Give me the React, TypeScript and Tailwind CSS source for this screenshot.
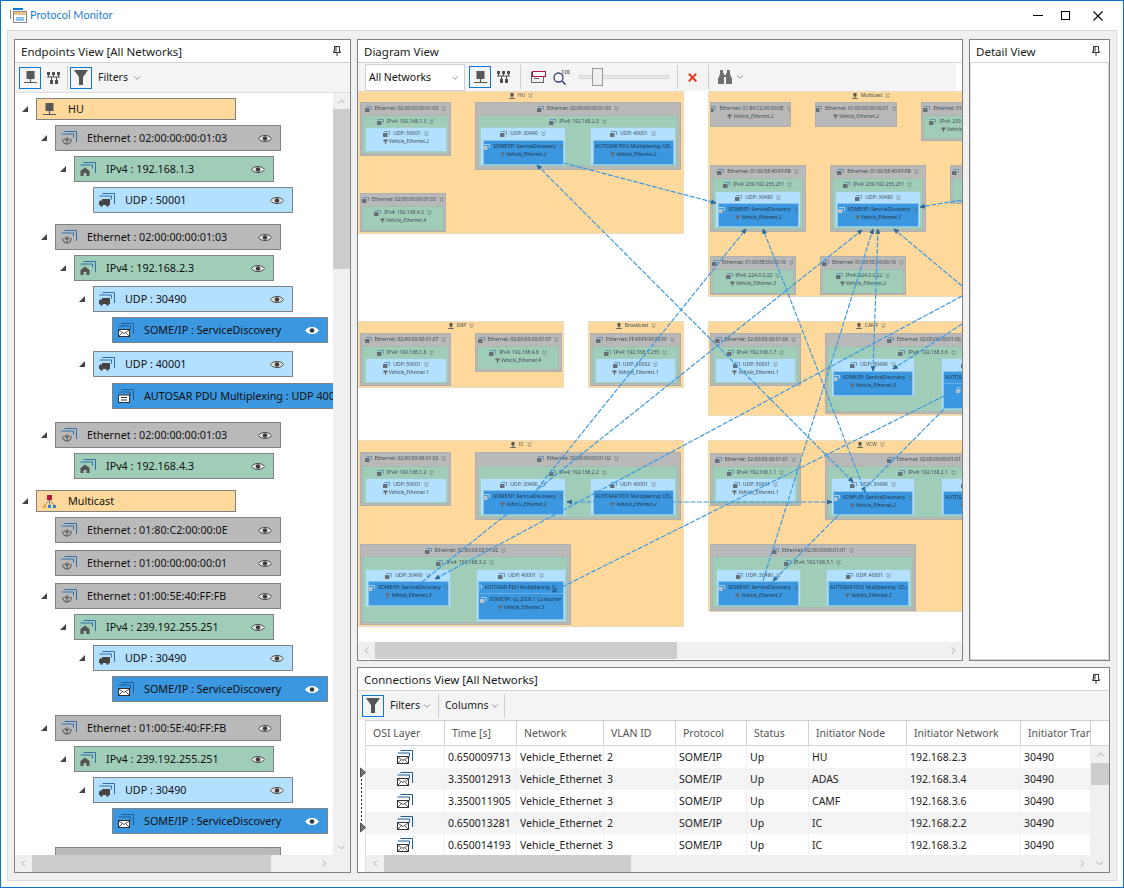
import type { ReactNode } from "react";
import { ChevronDown, ChevronLeft, ChevronRight, ChevronUp } from "lucide-react";

// ---- icons ----------------------------------------------------------------

function Arcs({ color = "#2f6fae" }: { color?: string }) {
  return <path d="M3.5 .5H15.5V11M.5 3H12.5V6.5" fill="none" stroke={color} strokeWidth="1" />;
}

function EthIcon() {
  return (
    <svg width="16" height="14" viewBox="0 0 16 14" className="shrink-0">
      <Arcs />
      <path d="M6 6v7M1.500 8c.5 3 2.500 5 4.500 5s4-2 4.500-5M3.500 7.500 6 10l2.500-2.500" fill="none" stroke="#666" strokeWidth="1.300" />
    </svg>
  );
}

function IpIcon() {
  return (
    <svg width="16" height="14" viewBox="0 0 16 14" className="shrink-0">
      <Arcs />
      <path d="M.5 9 5 5.500 9.500 9v5H6.500v-3h-3v3H.5z" fill="#555" />
    </svg>
  );
}

function UdpIcon() {
  return (
    <svg width="16" height="14" viewBox="0 0 16 14" className="shrink-0">
      <Arcs />
      <rect x="3" y="6" width="8" height="6" fill="#444" />
      <path d="M0 12V8.500L1 7.500H3V12z" fill="#444" />
      <circle cx="2.500" cy="12.500" r="1.300" fill="#444" />
      <circle cx="8.500" cy="12.500" r="1.300" fill="#444" />
    </svg>
  );
}

function MailIcon() {
  return (
    <svg width="16" height="14" viewBox="0 0 16 14" className="shrink-0">
      <Arcs color="#1f5d99" />
      <rect x=".5" y="6.500" width="11" height="7" fill="#fff" stroke="#333" />
      <path d="M.5 7 6 10.500 11.500 7M.5 13.500 4.500 9.500M11.500 13.500 7.500 9.500" fill="none" stroke="#333" strokeWidth=".8" />
    </svg>
  );
}

function PduIcon() {
  return (
    <svg width="16" height="14" viewBox="0 0 16 14" className="shrink-0">
      <Arcs color="#1f5d99" />
      <rect x=".5" y="6" width="11" height="7.500" fill="#fff" stroke="#333" />
      <path d="M3 8.500h6M3 11h6" stroke="#333" />
    </svg>
  );
}

function Eye({ light = false }: { light?: boolean }) {
  const c = light ? "#fff" : "#4a4a4a";
  return (
    <svg width="14" height="9" viewBox="0 0 14 9" className="shrink-0">
      <path d="M.5 4.500C3 .5 11 .5 13.500 4.500 11 8.500 3 8.500.5 4.500Z" fill={light ? "#fff" : "#e8e8e8"} stroke={c} strokeWidth="1" />
      <circle cx="7" cy="4.500" r="2.300" fill="#3c3c3c" />
    </svg>
  );
}

function Pin() {
  return (
    <svg width="8" height="10" viewBox="0 0 8 10">
      <path d="M1.500.5h5v5h1v1h-7v-1h1zM3 1v4.500" fill="#fff" stroke="#333" strokeWidth="1" />
      <path d="M4 6.500V10" stroke="#333" strokeWidth="1" />
    </svg>
  );
}

function NodeIcon() {
  return (
    <svg width="13" height="13" viewBox="0 0 13 13" className="shrink-0">
      <rect x="2.500" y="0" width="8" height="8" fill="#575757" />
      <path d="M6.500 8v3.500M0 11.500h13" stroke="#575757" strokeWidth="1.200" />
    </svg>
  );
}

function McastIcon() {
  return (
    <svg width="13" height="13" viewBox="0 0 13 13" className="shrink-0">
      <rect x="4" y="0" width="5" height="5" fill="#b01e3c" />
      <path d="M6.500 5 2 10M6.500 5v5M6.500 5 11 10" stroke="#777" strokeWidth=".8" />
      <rect x="0" y="10" width="3" height="3" fill="#f5a33b" />
      <rect x="5" y="10" width="3" height="3" fill="#2f86d6" />
      <rect x="10" y="10" width="3" height="3" fill="#2f86d6" />
    </svg>
  );
}

function NetIcon() {
  return (
    <svg width="13" height="12" viewBox="0 0 13 12" className="shrink-0">
      <path d="M0 0h3v3H0zM5 0h3v3H5zM10 0h3v3h-3zM3 8h3v4H3zM8 8h3v4H8z" fill="#4f4f4f" />
      <path d="M0 5h13M1.500 3v2M6.500 3v2M11.500 3v2M4.500 5v3M9.500 5v3" stroke="#4f4f4f" strokeWidth="1" />
    </svg>
  );
}

function Funnel() {
  return (
    <svg width="14" height="15" viewBox="0 0 14 15">
      <path d="M0 0h14L9 7v8H5V7z" fill="#555" />
    </svg>
  );
}

function Chevron() {
  return <ChevronDown size={10} strokeWidth={1.500} className="text-[#555]" />;
}

function ToolButton({ children }: { children: ReactNode }) {
  return (
    <div className="flex h-[22px] w-[22px] items-center justify-center border border-[#0a78d4]">{children}</div>
  );
}

function Sep() {
  return <div className="h-[24px] w-px bg-[#cfcfcf]" />;
}

// ---- scrollbars -------------------------------------------------------------

function HScroll({ thumb }: { thumb: string }) {
  return (
    <div className="flex h-[17px] shrink-0 items-center bg-[#f0f0f0] text-[#a0a0a0]">
      <div className="flex h-[17px] w-[17px] shrink-0 items-center justify-center">
        <ChevronLeft size={11} />
      </div>
      <div className={`h-[17px] shrink-0 bg-[#cdcdcd] ${thumb}`} />
      <div className="flex-1" />
      <div className="flex h-[17px] w-[17px] shrink-0 items-center justify-center">
        <ChevronRight size={11} />
      </div>
    </div>
  );
}

function VScroll({ thumb }: { thumb: string }) {
  return (
    <div className="flex w-[17px] shrink-0 flex-col bg-[#f0f0f0] pb-[17px] text-[#a0a0a0]">
      <div className="flex h-[16px] shrink-0 items-center justify-center">
        <ChevronUp size={11} />
      </div>
      <div className={`shrink-0 bg-[#cdcdcd] ${thumb}`} />
      <div className="flex-1" />
      <div className="flex h-[16px] shrink-0 items-center justify-center">
        <ChevronDown size={11} />
      </div>
    </div>
  );
}

// ---- panel ------------------------------------------------------------------

function Panel({ title, pin = true, className, children }: { title: string; pin?: boolean; className: string; children: ReactNode }) {
  return (
    <div className={`flex flex-col border border-[#808080] bg-white ${className}`}>
      <div className="flex h-[23px] shrink-0 items-center justify-between border-b border-[#d4d4d4] pl-[6px] pr-[9px] text-[#1a1a1a]">
        <span className="pt-px text-[11.5px]">{title}</span>
        {pin && <Pin />}
      </div>
      {children}
    </div>
  );
}

// ---- endpoints tree ----------------------------------------------------------

type Kind = "node" | "eth" | "ip" | "udp" | "some" | "pdu" | "mcast";

interface TreeRow {
  kind: Kind;
  text: string;
  indent: string;
  mt: string;
  width: string;
  arrow?: boolean;
  noEye?: boolean;
}

const rowBg: Record<Kind, string> = {
  node: "bg-[#ffd99b] h-[22px]",
  mcast: "bg-[#ffd99b] h-[22px]",
  eth: "bg-[#b9b9b9] h-[26px]",
  ip: "bg-[#9fcdb7] h-[26px]",
  udp: "bg-[#b3e0ff] h-[26px]",
  some: "bg-[#3b97df] h-[26px]",
  pdu: "bg-[#3b97df] h-[26px]",
};

const rowIcon: Record<Kind, ReactNode> = {
  node: <NodeIcon />,
  mcast: <McastIcon />,
  eth: <EthIcon />,
  ip: <IpIcon />,
  udp: <UdpIcon />,
  some: <MailIcon />,
  pdu: <PduIcon />,
};

const L0 = "ml-[7px]";
const L1 = "ml-[26px]";
const L2 = "ml-[45px]";
const L3 = "ml-[64px]";
const L4 = "ml-[83px]";
const W1 = "w-[226px]";
const W2 = "w-[200px]";
const W4 = "w-[216px]";

const tree: TreeRow[] = [
  { kind: "node", text: "HU", indent: L0, mt: "mt-[5px]", width: W2, arrow: true },
  { kind: "eth", text: "Ethernet : 02:00:00:00:01:03", indent: L1, mt: "mt-[5px]", width: W1, arrow: true },
  { kind: "ip", text: "IPv4 : 192.168.1.3", indent: L2, mt: "mt-[5px]", width: W2, arrow: true },
  { kind: "udp", text: "UDP : 50001", indent: L3, mt: "mt-[5px]", width: W2 },
  { kind: "eth", text: "Ethernet : 02:00:00:00:01:03", indent: L1, mt: "mt-[11px]", width: W1, arrow: true },
  { kind: "ip", text: "IPv4 : 192.168.2.3", indent: L2, mt: "mt-[5px]", width: W2, arrow: true },
  { kind: "udp", text: "UDP : 30490", indent: L3, mt: "mt-[5px]", width: W2, arrow: true },
  { kind: "some", text: "SOME/IP : ServiceDiscovery", indent: L4, mt: "mt-[5px]", width: W4 },
  { kind: "udp", text: "UDP : 40001", indent: L3, mt: "mt-[8px]", width: W2, arrow: true },
  { kind: "pdu", text: "AUTOSAR PDU Multiplexing : UDP 40001", indent: L4, mt: "mt-[6px]", width: "w-[260px]", noEye: true },
  { kind: "eth", text: "Ethernet : 02:00:00:00:01:03", indent: L1, mt: "mt-[13px]", width: W1, arrow: true },
  { kind: "ip", text: "IPv4 : 192.168.4.3", indent: L2, mt: "mt-[5px]", width: W2 },
  { kind: "mcast", text: "Multicast", indent: L0, mt: "mt-[11px]", width: W2, arrow: true },
  { kind: "eth", text: "Ethernet : 01:80:C2:00:00:0E", indent: L1, mt: "mt-[5px]", width: W1 },
  { kind: "eth", text: "Ethernet : 01:00:00:00:00:01", indent: L1, mt: "mt-[7px]", width: W1 },
  { kind: "eth", text: "Ethernet : 01:00:5E:40:FF:FB", indent: L1, mt: "mt-[7px]", width: W1, arrow: true },
  { kind: "ip", text: "IPv4 : 239.192.255.251", indent: L2, mt: "mt-[5px]", width: W2, arrow: true },
  { kind: "udp", text: "UDP : 30490", indent: L3, mt: "mt-[5px]", width: W2, arrow: true },
  { kind: "some", text: "SOME/IP : ServiceDiscovery", indent: L4, mt: "mt-[5px]", width: W4 },
  { kind: "eth", text: "Ethernet : 01:00:5E:40:FF:FB", indent: L1, mt: "mt-[13px]", width: W1, arrow: true },
  { kind: "ip", text: "IPv4 : 239.192.255.251", indent: L2, mt: "mt-[5px]", width: W2, arrow: true },
  { kind: "udp", text: "UDP : 30490", indent: L3, mt: "mt-[5px]", width: W2, arrow: true },
  { kind: "some", text: "SOME/IP : ServiceDiscovery", indent: L4, mt: "mt-[5px]", width: W4 },
  { kind: "eth", text: "", indent: L1, mt: "mt-[13px]", width: W1 },
];

function TreeItem({ row }: { row: TreeRow }) {
  const isGroup = row.kind === "node" || row.kind === "mcast";
  return (
    <div className={`flex items-center ${row.indent} ${row.mt}`}>
      <div className="flex w-[14px] shrink-0 items-center">
        {row.arrow && (
          <svg width="6" height="6" viewBox="0 0 6 6">
            <path d="M6 0v6H0z" fill="#444" />
          </svg>
        )}
      </div>
      <div
        className={`flex shrink-0 items-center border border-[#828282] text-[10.75px] text-[#111] ${rowBg[row.kind]} ${row.width} ${isGroup ? "pl-[6px]" : "pl-[5px]"}`}
      >
        {row.text && rowIcon[row.kind]}
        <span className={`whitespace-nowrap pt-px ${isGroup ? "ml-[12px]" : "ml-[10px]"}`}>{row.text}</span>
        {!isGroup && !row.noEye && row.text && (
          <div className="ml-auto mr-[8px]">
            <Eye light={row.kind === "some"} />
          </div>
        )}
      </div>
    </div>
  );
}

// ---- diagram canvas ----------------------------------------------------------

type BoxKind = "group" | "eth" | "ip" | "udp" | "some";

const boxBg: Record<BoxKind, string> = {
  group: "bg-[#ffd99b] border-[#e9dcc0]",
  eth: "bg-[#b9b9b9] border-[#b0b0a8]",
  ip: "bg-[#9fcdb7] border-[#aab8b0]",
  udp: "bg-[#b3e0ff] border-[#a4cdc8]",
  some: "bg-[#3b97df] border-[#86c4ee]",
};

interface Box {
  kind: BoxKind;
  x: number;
  y: number;
  w: number;
  h: number;
  label: string;
  sub?: string;
  extra?: string;
}

const VE = "Vehicle_Ethernet.";
const SD = "SOME/IP: ServiceDiscovery";
const PDU = "AUTOSAR PDU Multiplexing: UD...";

function b(kind: BoxKind, x: number, y: number, w: number, h: number, label: string, sub?: string, extra?: string): Box {
  return { kind, x, y, w, h, label, sub, extra };
}

const boxes: Box[] = [
  // HU
  b("group", 358, 92, 326, 143, "HU"),
  b("eth", 360, 103, 91, 54, "Ethernet: 02:00:00:00:01:03"),
  b("ip", 362, 116, 87, 39, "IPv4: 192.168.1.3"),
  b("udp", 365, 128, 82, 25, "UDP: 50001", VE + "2"),
  b("eth", 475, 103, 206, 68, "Ethernet: 02:00:00:00:01:03"),
  b("ip", 478, 116, 200, 52, "IPv4: 192.168.2.3"),
  b("udp", 480, 128, 86, 39, "UDP: 30490"),
  b("some", 483, 141, 81, 25, SD, VE + "2"),
  b("udp", 590, 128, 86, 39, "UDP: 40001"),
  b("some", 593, 141, 81, 25, PDU, VE + "2"),
  b("eth", 360, 194, 86, 39, "Ethernet: 02:00:00:00:01:03"),
  b("ip", 362, 207, 82, 25, "IPv4: 192.168.4.3", VE + "4"),
  // Multicast
  b("group", 708, 92, 326, 206, "Multicast"),
  b("eth", 710, 103, 81, 25, "Ethernet: 01:80:C2:00:00:0E", VE + "2"),
  b("eth", 815, 103, 82, 25, "Ethernet: 01:00:00:00:00:01", VE + "2"),
  b("eth", 921, 103, 86, 39, "Ethernet: 01:00:5E:40:FF:FB"),
  b("ip", 923, 116, 82, 24, "IPv4: 239.192.255.251", VE + "3"),
  b("eth", 710, 166, 96, 67, "Ethernet: 01:00:5E:40:FF:FB"),
  b("ip", 712, 179, 91, 52, "IPv4: 239.192.255.251"),
  b("udp", 715, 192, 86, 37, "UDP: 30490"),
  b("some", 718, 204, 81, 24, SD, VE + "2"),
  b("eth", 830, 166, 96, 67, "Ethernet: 01:00:5E:40:FF:FB"),
  b("ip", 832, 179, 91, 52, "IPv4: 239.192.255.251"),
  b("udp", 835, 192, 86, 37, "UDP: 30490"),
  b("some", 837, 204, 82, 24, SD, VE + "3"),
  b("eth", 950, 166, 86, 39, "Ethernet: 01:00:5E:00:00:16"),
  b("ip", 952, 179, 82, 24, "IPv4: 224.0.0.22", VE + "4"),
  b("eth", 710, 257, 86, 39, "Ethernet: 01:00:5E:00:00:16"),
  b("ip", 712, 270, 82, 25, "IPv4: 224.0.0.22", VE + "3"),
  b("eth", 820, 257, 86, 39, "Ethernet: 01:00:5E:00:00:16"),
  b("ip", 822, 270, 82, 25, "IPv4: 224.0.0.22", VE + "2"),
  // DRP
  b("group", 358, 322, 206, 67, "DRP"),
  b("eth", 360, 334, 91, 53, "Ethernet: 02:00:00:00:01:07"),
  b("ip", 362, 347, 87, 38, "IPv4: 192.168.1.8"),
  b("udp", 365, 359, 82, 25, "UDP: 50001", VE + "1"),
  b("eth", 475, 334, 87, 39, "Ethernet: 02:00:00:00:01:07"),
  b("ip", 477, 347, 82, 24, "IPv4: 192.168.4.8", VE + "4"),
  // Broadcast
  b("group", 588, 322, 96, 67, "Broadcast"),
  b("eth", 590, 334, 91, 53, "Ethernet: FF:FF:FF:FF:FF:FF"),
  b("ip", 592, 347, 87, 38, "IPv4: 192.168.1.255"),
  b("udp", 595, 359, 81, 25, "UDP: 50002", VE + "1"),
  // CAMF
  b("group", 708, 322, 326, 95, "CAMF"),
  b("eth", 710, 334, 91, 53, "Ethernet: 02:00:00:00:01:06"),
  b("ip", 712, 347, 87, 38, "IPv4: 192.168.1.7"),
  b("udp", 715, 359, 81, 25, "UDP: 50001", VE + "1"),
  b("eth", 825, 334, 206, 81, "Ethernet: 02:00:00:00:01:06"),
  b("ip", 827, 347, 200, 66, "IPv4: 192.168.3.6"),
  b("udp", 831, 359, 84, 39, "UDP: 30490"),
  b("some", 833, 372, 80, 25, SD, VE + "3"),
  b("udp", 941, 359, 86, 52, "UDP: 40001"),
  b("some", 943, 372, 81, 38, PDU, undefined, "SOME/IP: v2_2000.1"),
  // IC
  b("group", 358, 441, 326, 187, "IC"),
  b("eth", 360, 453, 91, 54, "Ethernet: 02:00:00:00:01:02"),
  b("ip", 362, 467, 87, 38, "IPv4: 192.168.1.2"),
  b("udp", 365, 479, 82, 25, "UDP: 50001", VE + "1"),
  b("eth", 475, 453, 206, 68, "Ethernet: 02:00:00:00:01:02"),
  b("ip", 478, 467, 200, 52, "IPv4: 192.168.2.2"),
  b("udp", 480, 479, 86, 38, "UDP: 30490"),
  b("some", 483, 491, 81, 25, SD, VE + "2"),
  b("udp", 590, 479, 86, 38, "UDP: 40001"),
  b("some", 593, 491, 81, 25, PDU, VE + "2"),
  b("eth", 360, 545, 211, 81, "Ethernet: 02:00:00:00:01:02"),
  b("ip", 362, 557, 206, 67, "IPv4: 192.168.3.2"),
  b("udp", 365, 570, 86, 38, "UDP: 30490"),
  b("some", 368, 582, 81, 25, SD, VE + "3"),
  b("udp", 476, 570, 90, 53, "UDP: 40001"),
  b("some", 478, 582, 86, 39, "AUTOSAR PDU Multiplexing: U...", VE + "3", "SOME/IP: v2_2000.1 Consumer"),
  // VCW
  b("group", 708, 441, 326, 172, "VCW"),
  b("eth", 710, 454, 91, 53, "Ethernet: 02:00:00:00:01:01"),
  b("ip", 712, 467, 87, 38, "IPv4: 192.168.1.1"),
  b("udp", 715, 479, 81, 24, "UDP: 50001", VE + "1"),
  b("eth", 825, 454, 206, 67, "Ethernet: 02:00:00:00:01:01"),
  b("ip", 827, 467, 200, 52, "IPv4: 192.168.2.1"),
  b("udp", 831, 479, 84, 38, "UDP: 30490"),
  b("some", 833, 492, 80, 24, SD, VE + "2"),
  b("udp", 941, 479, 86, 38, "UDP: 40001"),
  b("some", 943, 492, 81, 24, PDU, VE + "2"),
  b("eth", 710, 545, 206, 67, "Ethernet: 02:00:00:00:01:01"),
  b("ip", 712, 557, 201, 52, "IPv4: 192.168.3.1"),
  b("udp", 716, 570, 85, 37, "UDP: 30490"),
  b("some", 718, 582, 81, 25, SD, VE + "3"),
  b("udp", 826, 570, 85, 37, "UDP: 40001"),
  b("some", 828, 582, 81, 25, PDU, VE + "3"),
];

// x1, y1, x2, y2, tip at both ends
const edges: [number, number, number, number, boolean][] = [
  [564, 164, 716, 204, false],
  [537, 166, 853, 483, true],
  [537, 490, 746, 230, false],
  [422, 583, 862, 231, false],
  [962, 297, 435, 580, false],
  [962, 388, 552, 593, false],
  [865, 493, 763, 230, true],
  [763, 582, 873, 230, false],
  [873, 372, 878, 230, true],
  [962, 287, 894, 230, false],
  [962, 201, 920, 208, false],
  [962, 325, 893, 370, false],
  [962, 392, 773, 582, false],
  [567, 503, 832, 503, true],
];

function TinyIcon({ kind }: { kind: BoxKind }) {
  if (kind === "group") {
    return (
      <svg width="6" height="6" viewBox="0 0 6 6" className="shrink-0">
        <rect x="1.500" y="0" width="3" height="3.500" fill="#555" />
        <path d="M0 5.500h6M3 3v3" stroke="#555" strokeWidth=".8" />
      </svg>
    );
  }
  return (
    <svg width="7" height="6" viewBox="0 0 7 6" className="shrink-0">
      <path d="M1 .5h5.500V4" fill="none" stroke={kind === "some" ? "#cfe6f8" : "#4a7fb0"} strokeWidth=".7" />
      <rect x="0" y="2" width="4.500" height="4" fill={kind === "some" ? "#b8c4ce" : "#667078"} />
    </svg>
  );
}

function DoubleChevron() {
  return (
    <svg width="5" height="5" viewBox="0 0 5 5" className="shrink-0">
      <path d="M.5.5 2.500 2 4.500.5M.5 3 2.500 4.500 4.500 3" fill="none" stroke="#666" strokeWidth=".7" />
    </svg>
  );
}

function Sub({ text }: { text: string }) {
  return (
    <div className="flex items-center justify-center gap-[1px] italic">
      <svg width="5" height="5" viewBox="0 0 5 5" className="shrink-0">
        <path d="M.5.5h4v2H3V5H2V2.500H.5z" fill="#666" />
      </svg>
      <span className="whitespace-nowrap">{text}</span>
    </div>
  );
}

function DiagramBox({ box }: { box: Box }) {
  return (
    <div
      className={`absolute flex flex-col items-center overflow-hidden border text-[5px] leading-[7px] ${box.kind === "some" ? "text-[#1f3242]" : "text-[#3f4d55]"} ${boxBg[box.kind]}`}
      style={{ left: box.x - 358, top: box.y - 92, width: box.w, height: box.h }}
    >
      <div className={`flex items-center justify-center gap-[3px] whitespace-nowrap ${box.kind === "group" ? "mt-0" : "mt-[2px]"}`}>
        <TinyIcon kind={box.kind} />
        <span>{box.label}</span>
        <DoubleChevron />
      </div>
      {box.extra && (
        <div className="mt-[2px] flex w-full items-center justify-center gap-[2px] whitespace-nowrap border-t border-[#66aee8] pt-[2px]">
          <TinyIcon kind={box.kind} />
          <span>{box.extra}</span>
        </div>
      )}
      {box.sub && (
        <div className="mt-px">
          <Sub text={box.sub} />
        </div>
      )}
    </div>
  );
}

function DiagramCanvas() {
  return (
    <div className="relative h-[551px] w-[604px] shrink-0 overflow-hidden bg-white">
      <div className="absolute inset-0 blur-[0.3px]">
        {boxes.map((box, i) => (
          <DiagramBox key={i} box={box} />
        ))}
      </div>
      <svg width="604" height="551" viewBox="358 92 604 551" className="absolute inset-0">
        <defs>
          <marker id="tip" markerWidth="6" markerHeight="6" refX="5" refY="3" orient="auto-start-reverse" markerUnits="userSpaceOnUse">
            <path d="M.5 1 5 3 .5 5z" fill="#2c6ea6" stroke="#1f4f78" strokeWidth=".5" />
          </marker>
        </defs>
        {edges.map(([x1, y1, x2, y2, both], i) => (
          <line
            key={i}
            x1={x1}
            y1={y1}
            x2={x2}
            y2={y2}
            stroke="#3f9ae2"
            strokeWidth="1.200"
            strokeDasharray="5 1.500"
            markerEnd="url(#tip)"
            markerStart={both ? "url(#tip)" : undefined}
          />
        ))}
      </svg>
    </div>
  );
}

// ---- connections table --------------------------------------------------------

const columns = [
  { title: "OSI Layer", w: "w-[79px]" },
  { title: "Time [s]", w: "w-[72px]" },
  { title: "Network", w: "w-[87px]" },
  { title: "VLAN ID", w: "w-[72px]" },
  { title: "Protocol", w: "w-[71px]" },
  { title: "Status", w: "w-[62px]" },
  { title: "Initiator Node", w: "w-[98px]" },
  { title: "Initiator Network", w: "w-[114px]" },
  { title: "Initiator Transport", w: "w-[70px]" },
];

const connections = [
  ["0.650009713", "Vehicle_Ethernet", "2", "SOME/IP", "Up", "HU", "192.168.2.3", "30490"],
  ["3.350012913", "Vehicle_Ethernet", "3", "SOME/IP", "Up", "ADAS", "192.168.3.4", "30490"],
  ["3.350011905", "Vehicle_Ethernet", "3", "SOME/IP", "Up", "CAMF", "192.168.3.6", "30490"],
  ["0.650013281", "Vehicle_Ethernet", "2", "SOME/IP", "Up", "IC", "192.168.2.2", "30490"],
  ["0.650014193", "Vehicle_Ethernet", "3", "SOME/IP", "Up", "IC", "192.168.3.2", "30490"],
];

function ConnectionsTable() {
  return (
    <div className="flex min-h-0 flex-1">
      <div className="flex w-[8px] shrink-0 flex-col items-start border-r border-[#dcdcdc] pl-[2px] pt-[47px]">
        <svg width="6" height="66" viewBox="0 0 6 66">
          <path d="M.5 1 5.500 5.500.5 10z" fill="#777" stroke="#333" strokeWidth=".8" />
          <path d="M1.500 12v43" stroke="#222" strokeWidth="1" strokeDasharray="2 2" />
          <path d="M.5 56 5.500 60.500.5 65z" fill="#777" stroke="#333" strokeWidth=".8" />
        </svg>
      </div>
      <div className="flex min-w-0 flex-1 flex-col">
        <div className="flex min-h-0 flex-1">
          <div className="flex w-[725px] shrink-0 flex-col overflow-hidden">
            <div className="flex h-[26px] shrink-0 border-y border-[#d0d0d0]">
              {columns.map((c) => (
                <div
                  key={c.title}
                  className={`flex shrink-0 items-center overflow-hidden whitespace-nowrap border-r border-[#d0d0d0] pl-[7px] pt-px text-[10.5px] text-[#555] ${c.w}`}
                >
                  {c.title}
                </div>
              ))}
            </div>
            {connections.map((row, r) => (
              <div key={r} className={`flex h-[22px] shrink-0 ${r % 2 === 1 ? "bg-[#f4f4f4]" : "bg-white"}`}>
                <div className="flex w-[79px] shrink-0 items-center justify-center border-r border-[#f0f0f0]">
                  <MailIcon />
                </div>
                {row.map((cell, i) => (
                  <div
                    key={i}
                    className={`flex shrink-0 items-center whitespace-nowrap border-r border-[#f0f0f0] pl-[3px] pt-px text-[10.5px] text-[#222] ${columns[i + 1].w}`}
                  >
                    {cell}
                  </div>
                ))}
              </div>
            ))}
          </div>
          <div className="flex flex-1 flex-col">
            <div className="h-[26px] shrink-0 border-y border-[#d0d0d0]" />
            <div className="flex min-h-0 flex-1 flex-col bg-[#f0f0f0] text-[#a0a0a0]">
              <div className="flex h-[17px] items-center justify-center">
                <ChevronUp size={11} />
              </div>
              <div className="h-[22px] bg-[#cdcdcd]" />
            </div>
          </div>
        </div>
        <div className="flex h-[17px] shrink-0 items-center bg-[#f0f0f0] text-[#a0a0a0]">
          <div className="flex w-[18px] shrink-0 items-center justify-center">
            <ChevronLeft size={11} />
          </div>
          <div className="h-[17px] w-[247px] shrink-0 bg-[#cdcdcd]" />
          <div className="flex-1" />
          <ChevronRight size={11} className="mr-[6px]" />
          <ChevronDown size={11} className="mr-[4px]" />
        </div>
      </div>
    </div>
  );
}

// ---- page ---------------------------------------------------------------------

export default function App() {
  return (
    <div className="flex h-[888px] w-[1124px] flex-col border border-[#0a72c4] bg-white font-['Noto_Sans',sans-serif]">
      {/* title bar */}
      <div className="flex h-[29px] shrink-0 items-center pl-[9px] pr-[20px]">
        <svg width="17" height="15" viewBox="0 0 17 15">
          <path d="M0 2h13V0H3v2" fill="#0a78d4" />
          <path d="M.5 2v9" stroke="#888" />
          <rect x="3.500" y="3.500" width="13" height="11" fill="#fff" stroke="#888" />
          <rect x="4" y="4" width="12" height="3" fill="#e9c58b" />
          <rect x="6" y="9" width="8" height="4" fill="#8cc4ef" />
        </svg>
        <span className="ml-[3px] font-['Lato',sans-serif] text-[11px] text-[#1f7fd0]">Protocol Monitor</span>
        <div className="ml-auto flex items-center">
          <div className="h-px w-[10px] bg-black" />
          <div className="ml-[18px] h-[9px] w-[9px] border border-black" />
          <svg width="10" height="10" viewBox="0 0 10 10" className="ml-[23px]">
            <path d="M.5.5l9 9M9.500.5l-9 9" stroke="#000" strokeWidth="1.100" />
          </svg>
        </div>
      </div>
      {/* docking area */}
      <div className="mx-[6px] flex h-[851px] shrink-0 gap-[6px] border border-[#dadada] bg-[#f0f0f0] px-[6px] pb-[7px] pt-[8px]">
        <Panel title="Endpoints View [All Networks]" className="w-[337px] shrink-0">
          <div className="flex h-[30px] shrink-0 items-center border-b border-[#dcdcdc] bg-[#f4f4f4] pl-[4px]">
            <ToolButton>
              <NodeIcon />
            </ToolButton>
            <div className="ml-[6px]">
              <NetIcon />
            </div>
            <div className="ml-[7px] mr-[2px]">
              <Sep />
            </div>
            <ToolButton>
              <Funnel />
            </ToolButton>
            <span className="ml-[6px] pt-px text-[10.5px] text-[#222]">Filters</span>
            <div className="ml-[4px]">
              <Chevron />
            </div>
          </div>
          <div className="flex min-h-0 flex-1">
            <div className="flex min-w-0 flex-1 flex-col">
              <div className="min-h-0 flex-1 overflow-hidden">
                {tree.map((row, i) => (
                  <TreeItem key={i} row={row} />
                ))}
              </div>
              <HScroll thumb="w-[239px]" />
            </div>
            <VScroll thumb="h-[160px]" />
          </div>
        </Panel>
        <div className="flex min-w-0 flex-1 flex-col gap-[6px]">
          <div className="flex h-[622px] shrink-0 gap-[6px]">
            <Panel title="Diagram View" pin={false} className="w-[606px] shrink-0">
              <div className="flex h-[28px] w-[598px] shrink-0 items-center bg-[#f4f4f4] pl-[7px]">
                <div className="flex h-[27px] w-[100px] shrink-0 items-center justify-between border border-[#cfcfcf] bg-white pl-[3px] pr-[4px] pt-px text-[10.5px] text-[#111]">
                  All Networks
                  <Chevron />
                </div>
                <div className="ml-[4px]">
                  <ToolButton>
                    <NodeIcon />
                  </ToolButton>
                </div>
                <div className="ml-[6px]">
                  <NetIcon />
                </div>
                <div className="ml-[10px]">
                  <Sep />
                </div>
                <svg width="15" height="12" viewBox="0 0 15 12" className="ml-[10px]">
                  <rect x=".5" y="1.500" width="12" height="10" fill="#eee" stroke="#666" />
                  <path d="M3 7.500h5" stroke="#666" />
                  <rect x="1.500" y=".5" width="13" height="5" fill="#fff" stroke="#b3123c" />
                </svg>
                <svg width="17" height="16" viewBox="0 0 17 16" className="ml-[7px]">
                  <circle cx="5.500" cy="8.500" r="4.500" fill="none" stroke="#3b3f70" strokeWidth="1.300" />
                  <path d="M9 12l3.500 3.500" stroke="#3b3f70" strokeWidth="1.600" />
                  <text x="8" y="5" fontSize="6" fill="#222">100</text>
                </svg>
                <div className="relative ml-[9px] h-[4px] w-[90px] border border-[#d8d8d8] bg-[#e8e8e8]">
                  <div className="absolute left-[12px] top-[-8px] h-[18px] w-[11px] border border-[#9a9a9a] bg-[#efefef]" />
                </div>
                <div className="ml-[8px]">
                  <Sep />
                </div>
                <svg width="9" height="9" viewBox="0 0 9 9" className="ml-[10px]">
                  <path d="M.8.8l7.400 7.400M8.200.8.8 8.200" stroke="#ea3b1f" strokeWidth="2" />
                </svg>
                <div className="ml-[11px]">
                  <Sep />
                </div>
                <svg width="14" height="14" viewBox="0 0 14 14" className="ml-[9px]">
                  <path d="M2 0h3v3h1v2h2V3h1V0h3v4l2 5v5H8V7H6v7H0V9l2-5z" fill="#6f6f6f" />
                </svg>
                <div className="ml-[3px]">
                  <Chevron />
                </div>
              </div>
              <DiagramCanvas />
              <HScroll thumb="w-[302px]" />
            </Panel>
            <Panel title="Detail View" className="min-w-0 flex-1">
              <div className="flex-1 border border-t-0 border-[#d8d8d8]" />
            </Panel>
          </div>
          <Panel title="Connections View [All Networks]" className="min-h-0 flex-1">
            <div className="flex h-[29px] shrink-0 items-center bg-[#f4f4f4] pl-[4px]">
              <ToolButton>
                <Funnel />
              </ToolButton>
              <span className="ml-[6px] pt-px text-[10.5px] text-[#222]">Filters</span>
              <div className="ml-[2px]">
                <Chevron />
              </div>
              <div className="ml-[6px]">
                <Sep />
              </div>
              <span className="ml-[6px] pt-px text-[10.5px] text-[#222]">Columns</span>
              <div className="ml-[2px]">
                <Chevron />
              </div>
              <div className="ml-[4px]">
                <Sep />
              </div>
            </div>
            <ConnectionsTable />
          </Panel>
        </div>
      </div>
    </div>
  );
}
